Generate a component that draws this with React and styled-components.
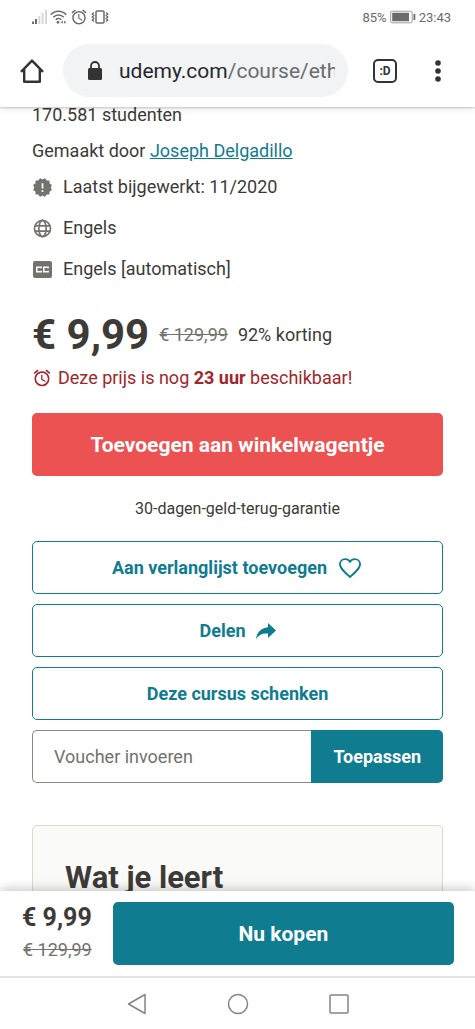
import styled, { createGlobalStyle } from 'styled-components';

const GlobalStyle = createGlobalStyle`
  * {
    box-sizing: border-box;
  }

  body {
    margin: 0;
    background: #fff;
    font-family: Roboto, Arial, sans-serif;
    color: #3c3b37;
  }

  button,
  input {
    font-family: inherit;
  }
`;

const Screen = styled.div`
  display: flex;
  flex-direction: column;
  height: 100vh;
  overflow: hidden;
`;

const StatusBar = styled.div`
  display: flex;
  height: 34px;
  padding: 0 24px 0 32px;
  justify-content: space-between;
  align-items: center;
  flex-shrink: 0;
  color: #6b6b6b;
  font-size: 13px;
`;

const StatusGroup = styled.div`
  display: flex;
  align-items: center;
  gap: 3px;
`;

const BrowserBar = styled.header`
  display: flex;
  height: 73px;
  padding: 0 23px 0 18px;
  align-items: center;
  flex-shrink: 0;
  z-index: 1;
  background: #fff;
  box-shadow: 0 1px 2px rgba(0, 0, 0, 0.2), 0 2px 8px rgba(0, 0, 0, 0.08);
  clip-path: inset(0 0 -12px 0);
`;

const IconButton = styled.button`
  display: flex;
  width: 28px;
  height: 40px;
  padding: 0;
  justify-content: center;
  align-items: center;
  flex-shrink: 0;
  border: none;
  background: none;
  color: #333;
`;

const AddressBar = styled.div`
  display: flex;
  height: 53px;
  margin: 0 23px 0 17px;
  padding: 0 13px 0 24px;
  align-items: center;
  gap: 16px;
  flex: 1;
  min-width: 0;
  border-radius: 27px;
  background: #f1f3f4;
`;

const Url = styled.div`
  flex: 1;
  overflow: hidden;
  white-space: nowrap;
  color: #6a6c6f;
  font-size: 21px;
  line-height: 30px;
`;

const Domain = styled.span`
  color: #27282b;
`;

const BrowserActions = styled.div`
  display: flex;
  gap: 25px;
`;

const Page = styled.main`
  flex: 1;
  min-height: 0;
  overflow: hidden;
`;

const Content = styled.div`
  display: flex;
  flex-direction: column;
  margin-top: -3px;
  padding: 0 32px;
`;

const MetaLine = styled.div`
  margin-bottom: 14px;
  font-size: 18px;
  line-height: 22px;
`;

const AuthorLink = styled.a`
  color: #0f7c90;
  text-decoration: underline;
`;

const MetaList = styled.ul`
  display: flex;
  flex-direction: column;
  gap: 19px;
  margin: 0;
  padding: 0;
  list-style: none;
`;

const MetaItem = styled.li`
  display: flex;
  align-items: center;
  gap: 10px;
  font-size: 18px;
  line-height: 22px;

  svg {
    flex-shrink: 0;
    color: #73726c;
  }
`;

const PriceRow = styled.div`
  display: flex;
  margin-top: 29px;
  align-items: center;
  gap: 10px;
  font-size: 18px;
  line-height: 52px;
`;

const Price = styled.strong`
  font-size: 42px;
  font-weight: 700;
`;

const OldPrice = styled.s`
  color: #73726c;
  font-size: 18px;
`;

const Deadline = styled.div`
  display: flex;
  margin-top: 5px;
  align-items: center;
  gap: 6px;
  color: #a1262b;
  font-size: 18px;
  line-height: 24px;
`;

const Button = styled.button`
  display: flex;
  width: 100%;
  height: ${({ $large }) => ($large ? '63px' : '53px')};
  padding: 0 16px;
  justify-content: center;
  align-items: center;
  gap: 10px;
  border: none;
  border-radius: 5px;
  background: ${({ $color }) => $color || '#0f7c90'};
  color: #fff;
  font-size: ${({ $large }) => ($large ? '21px' : '18px')};
  font-weight: 700;
`;

const CartButton = styled(Button)`
  margin-top: 23px;
`;

const OutlineButton = styled(Button)`
  border: 1px solid #0f7c90;
  background: #fff;
  color: #0f7c90;
`;

const Guarantee = styled.p`
  margin: 23px 0 22px;
  font-size: 16px;
  line-height: 20px;
  text-align: center;
`;

const Actions = styled.div`
  display: flex;
  flex-direction: column;
  gap: 10px;
`;

const VoucherForm = styled.form`
  display: flex;
  height: 53px;
`;

const VoucherInput = styled.input`
  flex: 1;
  min-width: 0;
  padding: 0 21px;
  border: 1px solid #8a8982;
  border-right: none;
  border-radius: 5px 0 0 5px;
  background: #fff;
  color: #3c3b37;
  font-size: 18px;

  &::placeholder {
    color: #73726c;
    opacity: 1;
  }
`;

const ApplyButton = styled(Button)`
  width: auto;
  padding: 0 22px;
  border-radius: 0 5px 5px 0;
`;

const LearnBox = styled.section`
  margin-top: 42px;
  padding: 32px;
  border: 1px solid #dcdacb;
  border-radius: 5px;
  background: #fafaf8;
`;

const LearnTitle = styled.h2`
  margin: 0;
  font-size: 31px;
  font-weight: 700;
  line-height: 40px;
`;

const BuyBar = styled.div`
  display: flex;
  height: 87px;
  padding: 0 21px 0 22px;
  align-items: center;
  gap: 21px;
  flex-shrink: 0;
  z-index: 1;
  border-bottom: 2px solid #e4e4e4;
  background: #fff;
  box-shadow: 0 -2px 10px rgba(0, 0, 0, 0.22);
`;

const BuyPrice = styled.div`
  display: flex;
  flex-direction: column;
  align-items: flex-end;
  flex-shrink: 0;
  line-height: 32px;
`;

const SmallPrice = styled.strong`
  font-size: 25px;
  font-weight: 700;
`;

const SystemNav = styled.nav`
  display: flex;
  height: 51px;
  justify-content: center;
  align-items: center;
  gap: 73px;
  flex-shrink: 0;
  z-index: 1;
  background: #fff;
`;

const SignalIcon = () => (
  <svg width="15" height="14" viewBox="0 0 15 14">
    <path d="M0 11.500h2V14H0zM3 9h2v5H3z" fill="#6b6b6b" />
    <path d="M6.300 6h2v8h-2zM9.600 3h2v11h-2zM13 0h2v14h-2z" fill="#d8d8d8" />
  </svg>
);

const WifiIcon = () => (
  <svg width="17" height="14" viewBox="0 0 17 14" fill="none" stroke="currentColor" strokeWidth="1.500">
    <path d="M.8 4.700C5 .2 12 .2 16.200 4.700M3.200 7.300c3-3.200 7.600-3.200 10.600 0M5.700 9.700c1.700-1.700 4-1.700 5.600 0" />
    <circle cx="8" cy="12.300" r="1.400" fill="currentColor" stroke="none" />
    <path d="M10.800 12.200l2-1.600v3.200zM16.200 12.200l-2-1.600v3.200z" fill="currentColor" stroke="none" />
  </svg>
);

const AlarmIcon = ({ size = 19 }) => (
  <svg width={size} height={size} viewBox="0 0 24 24" fill="currentColor">
    <path d="M22 5.720l-4.600-3.860-1.290 1.530 4.600 3.860L22 5.720zM7.880 3.390L6.600 1.860 2 5.710l1.290 1.530 4.590-3.850zM12.500 8H11v6l4.750 2.850.75-1.230-4-2.370V8zM12 4c-4.970 0-9 4.030-9 9s4.020 9 9 9a9 9 0 0 0 0-18zm0 16c-3.870 0-7-3.130-7-7s3.130-7 7-7 7 3.130 7 7-3.130 7-7 7z" />
  </svg>
);

const VibrateIcon = () => (
  <svg width="18" height="14" viewBox="0 0 18 14" fill="none" stroke="currentColor" strokeWidth="1.500">
    <rect x="5" y="1" width="8" height="12" rx="1" />
    <path d="M2.800 2.500L1.200 4l1.600 1.500L1.200 7l1.600 1.500L1.200 10l1.600 1.500M15.200 2.500L16.800 4l-1.600 1.500L16.800 7l-1.600 1.500 1.600 1.500-1.600 1.500" strokeWidth="1.300" />
  </svg>
);

const BatteryIcon = () => (
  <svg width="26" height="14" viewBox="0 0 26 14">
    <rect x=".7" y="1.200" width="21.500" height="11.600" rx="1.500" fill="none" stroke="#9a9a9a" />
    <path d="M2.200 2.800h16.800v8.400H2.200zM23.500 4h1.800v6h-1.800z" fill="#6b6b6b" />
  </svg>
);

const HomeIcon = () => (
  <svg width="26" height="26" viewBox="0 0 26 26" fill="none" stroke="currentColor" strokeWidth="2.400" strokeLinejoin="round">
    <path d="M2 13.800L13 2.600l11 11.200M5.200 11.500v12.300h15.600V11.500" />
  </svg>
);

const LockIcon = () => (
  <svg width="16" height="20" viewBox="0 0 16 20">
    <rect x="1" y="7" width="14" height="12" rx="1.500" fill="#333" />
    <path d="M4 8V5a4 4 0 0 1 8 0v3" fill="none" stroke="#333" strokeWidth="1.800" />
  </svg>
);

const TabsLabel = styled.span`
  display: flex;
  width: 24px;
  height: 24px;
  justify-content: center;
  align-items: center;
  flex-shrink: 0;
  border: 2px solid #333;
  border-radius: 5px;
  font-size: 12px;
  font-weight: 700;
`;

const MoreIcon = () => (
  <svg width="6" height="22" viewBox="0 0 6 22" fill="currentColor">
    <circle cx="3" cy="3" r="2.800" />
    <circle cx="3" cy="11" r="2.800" />
    <circle cx="3" cy="19" r="2.800" />
  </svg>
);

const UpdateIcon = () => (
  <svg width="21" height="21" viewBox="0 0 24 24">
    <g fill="currentColor">
      <rect x="4" y="4" width="16" height="16" rx="1" />
      <rect x="4" y="4" width="16" height="16" rx="1" transform="rotate(30 12 12)" />
      <rect x="4" y="4" width="16" height="16" rx="1" transform="rotate(60 12 12)" />
    </g>
    <path d="M11 7h2v6h-2zM11 15h2v2h-2z" fill="#fff" />
  </svg>
);

const GlobeIcon = () => (
  <svg width="21" height="21" viewBox="0 0 24 24" fill="none" stroke="currentColor" strokeWidth="1.900">
    <circle cx="12" cy="12" r="9.200" />
    <ellipse cx="12" cy="12" rx="4.200" ry="9.200" />
    <path d="M3.500 9h17M3.500 15h17" />
  </svg>
);

const CaptionIcon = () => (
  <svg width="21" height="21" viewBox="0 0 21 21">
    <rect x="1" y="2" width="19" height="17" rx="2" fill="currentColor" />
    <path d="M9.200 9.200V8.300H4.800v4.400h4.400v-.9M16.200 9.200V8.300h-4.400v4.400h4.400v-.9" fill="none" stroke="#fff" strokeWidth="1.500" />
  </svg>
);

const HeartIcon = () => (
  <svg width="26" height="26" viewBox="0 0 24 24" fill="none" stroke="currentColor" strokeWidth="1.700">
    <path d="M12 20.300l-1.200-1.100C6 14.800 2.700 12 2.700 8.600c0-2.800 2.100-4.800 4.800-4.800 1.900 0 3.600 1 4.500 2.500.9-1.500 2.600-2.500 4.500-2.500 2.700 0 4.800 2 4.800 4.800 0 3.400-3.300 6.200-8.100 10.600z" />
  </svg>
);

const ShareIcon = () => (
  <svg width="20" height="16" viewBox="0 0 20 16" fill="currentColor">
    <path d="M12 0l8 7.500-8 7.500v-4.500C7 10 3 11.500 0 16 .8 9.500 5 4.700 12 4.200z" />
  </svg>
);

const BackIcon = () => (
  <svg width="20" height="22" viewBox="0 0 20 22" fill="none" stroke="#858585" strokeWidth="1.500" strokeLinejoin="round">
    <path d="M18 1.500v19L1.500 11z" />
  </svg>
);

const CircleIcon = () => (
  <svg width="22" height="22" viewBox="0 0 22 22" fill="none" stroke="#858585" strokeWidth="1.500">
    <circle cx="11" cy="11" r="9.500" />
  </svg>
);

const SquareIcon = () => (
  <svg width="20" height="20" viewBox="0 0 20 20" fill="none" stroke="#858585" strokeWidth="1.500">
    <rect x="1" y="1" width="18" height="18" rx="1" />
  </svg>
);

const App = () => {
  return (
    <Screen>
      <GlobalStyle />
      <StatusBar>
        <StatusGroup>
          <SignalIcon />
          <WifiIcon />
          <AlarmIcon size={18} />
          <VibrateIcon />
        </StatusGroup>
        <StatusGroup>
          <span>85%</span>
          <BatteryIcon />
          <span>23:43</span>
        </StatusGroup>
      </StatusBar>
      <BrowserBar>
        <IconButton aria-label="Home">
          <HomeIcon />
        </IconButton>
        <AddressBar>
          <LockIcon />
          <Url>
            <Domain>udemy.com</Domain>/course/eth
          </Url>
        </AddressBar>
        <BrowserActions>
          <IconButton aria-label="Tabs">
            <TabsLabel>:D</TabsLabel>
          </IconButton>
          <IconButton aria-label="Menu">
            <MoreIcon />
          </IconButton>
        </BrowserActions>
      </BrowserBar>
      <Page>
        <Content>
          <MetaLine>170.581 studenten</MetaLine>
          <MetaLine>
            Gemaakt door <AuthorLink href="#instructor">Joseph Delgadillo</AuthorLink>
          </MetaLine>
          <MetaList>
            <MetaItem>
              <UpdateIcon />
              Laatst bijgewerkt: 11/2020
            </MetaItem>
            <MetaItem>
              <GlobeIcon />
              Engels
            </MetaItem>
            <MetaItem>
              <CaptionIcon />
              Engels [automatisch]
            </MetaItem>
          </MetaList>
          <PriceRow>
            <Price>€ 9,99</Price>
            <OldPrice>€ 129,99</OldPrice>
            <span>92% korting</span>
          </PriceRow>
          <Deadline>
            <AlarmIcon size={20} />
            <span>
              Deze prijs is nog <b>23 uur</b> beschikbaar!
            </span>
          </Deadline>
          <CartButton $large $color="#ec5252">
            Toevoegen aan winkelwagentje
          </CartButton>
          <Guarantee>30-dagen-geld-terug-garantie</Guarantee>
          <Actions>
            <OutlineButton>
              Aan verlanglijst toevoegen
              <HeartIcon />
            </OutlineButton>
            <OutlineButton>
              Delen
              <ShareIcon />
            </OutlineButton>
            <OutlineButton>Deze cursus schenken</OutlineButton>
            <VoucherForm onSubmit={(e) => e.preventDefault()}>
              <VoucherInput aria-label="Voucher invoeren" placeholder="Voucher invoeren" />
              <ApplyButton type="submit">Toepassen</ApplyButton>
            </VoucherForm>
          </Actions>
          <LearnBox>
            <LearnTitle>Wat je leert</LearnTitle>
          </LearnBox>
        </Content>
      </Page>
      <BuyBar>
        <BuyPrice>
          <SmallPrice>€ 9,99</SmallPrice>
          <OldPrice>€ 129,99</OldPrice>
        </BuyPrice>
        <Button $large>Nu kopen</Button>
      </BuyBar>
      <SystemNav>
        <IconButton aria-label="Terug">
          <BackIcon />
        </IconButton>
        <IconButton aria-label="Startscherm">
          <CircleIcon />
        </IconButton>
        <IconButton aria-label="Recente apps">
          <SquareIcon />
        </IconButton>
      </SystemNav>
    </Screen>
  );
};

export default App;
